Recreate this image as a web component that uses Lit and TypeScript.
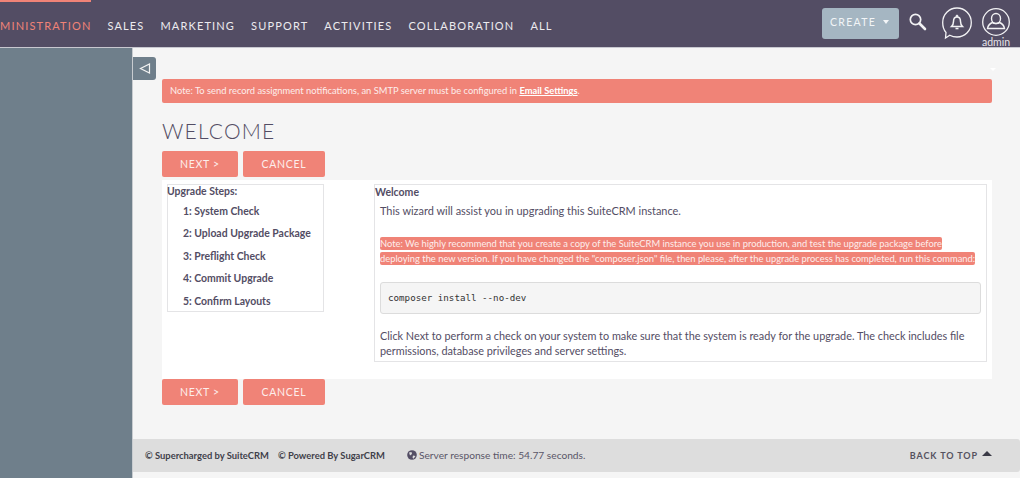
import { LitElement, html, css } from "lit";
import { customElement } from "lit/decorators.js";

@customElement("app-root")
export class AppRoot extends LitElement {
  static styles = css`
    :host { display: block; width: 1024px; height: 478px; overflow: hidden; background: #fff; font-family: Lato, "Open Sans", sans-serif; position: relative; }
    .page { width: 1020px; height: 478px; display: flex; flex-direction: column; }
    .top { height: 47px; flex: none; background: #534d64; display: flex; align-items: flex-start; position: relative; overflow: hidden; border-bottom: 1px solid #c8c8d0; box-sizing: content-box; }
    .nav { display: flex; margin-left: -18px; height: 47px; align-items: center; flex: none; }
    .nav a { font-size: 11px; letter-spacing: 1.15px; color: #ecebef; text-transform: uppercase; margin-right: 16px; white-space: nowrap; padding-top: 3px; }
    .nav a.on { color: #f08377; position: relative; }
    .accent { position: absolute; left: 0; top: 0; width: 91px; height: 2px; background: #f08377; }
    .create { position: absolute; left: 822px; top: 8px; width: 77px; height: 31px; background: #a5b6c2; border-radius: 3px; color: #f2f5f7; font-size: 10.5px; letter-spacing: 1.3px; display: flex; align-items: center; padding: 0 0 3px 8px; box-sizing: border-box; gap: 7px; }
    .caret { width: 0; height: 0; border-left: 3.5px solid transparent; border-right: 3.5px solid transparent; border-top: 4px solid #f4f6f8; margin-top: -1px; }
    .ico { position: absolute; }
    .adminlbl { position: absolute; left: 982px; top: 36px; font-size: 10.5px; color: #e6e5ea; line-height: 12px; }
    .body { flex: 1; display: flex; min-height: 0; }
    .side { width: 132px; flex: none; background: #6f7f8b; border-right: 1px solid #c8ccd0; }
    .main { flex: 1; background: #f5f5f5; position: relative; display: flex; flex-direction: column; min-width: 0; }
    .toggle { position: absolute; left: 0; top: 9px; width: 23px; height: 23px; background: #6f7f8b; border-radius: 0 3px 3px 0; display: flex; align-items: center; justify-content: center; }
    .smallcaret { position: absolute; right: 24px; top: 20px; width: 0; height: 0; border-left: 3px solid transparent; border-right: 3px solid transparent; border-top: 3px solid #fff; }
    .content { flex: 1; padding: 31px 28px 0 29px; }
    .alert { height: 24px; background: #f08377; border-radius: 2px; color: #fdeeec; font-size: 9.35px; line-height: 24px; padding-left: 8px; }
    .alert b { color: #fff; text-decoration: underline; font-weight: 700; }
    h1 { margin: 16px 0 0; font-weight: 300; font-size: 21px; line-height: 24px; letter-spacing: 1.2px; color: #534d64; height: 24px; }
    .btns { display: flex; gap: 5px; margin-top: 8px; height: 26px; }
    .panel + .btns { margin-top: 0; }
    .btn { height: 26px; background: #f08377; border-radius: 2px; color: #fdeeec; font-size: 10.5px; letter-spacing: 0.7px; display: flex; align-items: center; justify-content: center; box-sizing: border-box; }
    .next { width: 76px; }
    .cancel { width: 82px; }
    .panel { margin-top: 3px; height: 199px; background: #fff; padding: 4px 5px 0; box-sizing: border-box; display: flex; align-items: flex-start; }
    .steps { width: 157px; height: 128px; border: 1px solid #e4e4e6; box-sizing: border-box; flex: none; color: #534d64; font-size: 10.45px; }
    .steps .t { line-height: 14px; font-weight: 700; margin: -1px 0 0 -1px; }
    .steps ul { list-style: none; margin: 2px 0 0; padding: 0 0 0 15px; }
    .steps li { height: 22.4px; line-height: 22.4px; font-weight: 700; }
    .wel { margin-left: 50px; width: 613px; height: 178px; border: 1px solid #e4e4e6; box-sizing: border-box; color: #534d64; flex: none; }
    .wel .t { font-size: 10.5px; font-weight: 700; line-height: 14px; }
    .wel p { margin: 0 0 0 5px; }
    .p1 { font-size: 10.95px; line-height: 16px; margin-top: 4px !important; }
    .note { margin-top: 17px !important; line-height: 15.4px; font-size: 9.35px; color: #fdeeec; width: 600px; }
    .note span { background: #f08377; border-radius: 2px; padding: 1px 0; -webkit-box-decoration-break: clone; box-decoration-break: clone; }
    pre { margin: 15px 5px 0; height: 32px; background: #f5f5f5; border: 1px solid #dcdcdc; border-radius: 3px; box-sizing: border-box; padding: 0 7px; font-family: "DejaVu Sans Mono", monospace; font-size: 9.2px; line-height: 29px; color: #333; }
    .p3 { font-size: 10.85px; margin-top: 14px !important; line-height: 15.6px; }
    .foot { height: 33px; flex: none; margin: 0 0 6px; background: #dddddd; border-radius: 0 3px 3px 0; display: flex; align-items: center; color: #534d64; padding-left: 12px; position: relative; }
    .foot .c { font-size: 9.4px; font-weight: 700; color: #3f3f4a; white-space: nowrap; }
    .foot .c2 { margin-left: 9px; }
    .foot .srv { margin-left: 22px; font-size: 10.2px; color: #5a5668; display: flex; align-items: center; gap: 2px; white-space: nowrap; margin-top: -2px; }
    .foot .back { position: absolute; right: 28px; top: 11px; font-size: 9px; font-weight: 700; letter-spacing: 0.9px; color: #55525f; white-space: nowrap; display: flex; align-items: flex-start; gap: 4px; }
    .tri { width: 0; height: 0; border-left: 5px solid transparent; border-right: 5px solid transparent; border-bottom: 5px solid #3a3a46; margin-top: 1px; }
  `;

  render() {
    const nav = ["Administration", "Sales", "Marketing", "Support", "Activities", "Collaboration", "All"];
    const steps = ["1: System Check", "2: Upload Upgrade Package", "3: Preflight Check", "4: Commit Upgrade", "5: Confirm Layouts"];
    const buttons = html`<div class="btns"><div class="btn next">NEXT &gt;</div><div class="btn cancel">CANCEL</div></div>`;
    return html`
      <div class="page">
        <div class="top">
          <div class="accent"></div>
          <div class="nav">${nav.map((n, i) => html`<a class=${i === 0 ? "on" : ""}>${n}</a>`)}</div>
          <div class="create">CREATE <span class="caret"></span></div>
          <svg class="ico" style="left:908px;top:12px" width="20" height="20" viewBox="0 0 20 20" fill="none" stroke="#f2f2f4">
            <circle cx="7.500" cy="7.500" r="5.200" stroke-width="1.700"/><path d="M11.500 11.500L17 17" stroke-width="2.600" stroke-linecap="round"/>
          </svg>
          <svg class="ico" style="left:941px;top:6px" width="32" height="34" viewBox="0 0 32 34" fill="none" stroke="#f2f2f4">
            <path d="M5 26.500C2.800 24 1.700 20.800 1.700 16.500C1.700 8.500 8 2 16 2C24 2 30.300 8.500 30.300 16.500C30.300 24.500 24 31 16 31C13.500 31 11 30.400 8.800 29.200L4.500 32L5 26.500Z" stroke-width="1.300"/>
            <path d="M12.500 20.500H10.500C12 19 12.500 17.800 12.500 15.500C12.500 12.700 13.700 11 16 11C18.300 11 19.500 12.700 19.500 15.500C19.500 17.800 20 19 21.500 20.500H19.500Z" stroke-width="1.500"/>
            <path d="M14.500 22.500H17.500" stroke-width="1.600"/><circle cx="16" cy="10" r="0.900" fill="#f2f2f4"/>
          </svg>
          <svg class="ico" style="left:982px;top:8px" width="28" height="28" viewBox="0 0 28 28" fill="none" stroke="#f2f2f4">
            <circle cx="14" cy="14" r="13.300" stroke-width="1.300"/>
            <ellipse cx="14" cy="10.500" rx="4.500" ry="5" stroke-width="1.400"/>
            <path d="M10.500 14.500C8 15.500 6 17.500 5.500 20.500H22.500C22 17.500 20 15.500 17.500 14.500C16.500 16 11.500 16 10.500 14.500Z" stroke-width="1.400"/>
          </svg>
          <div class="adminlbl">admin</div>
        </div>
        <div class="body">
          <div class="side"></div>
          <div class="main">
            <div class="toggle">
              <svg width="12" height="11" viewBox="0 0 12 11" fill="none" stroke="#f2f2f2" stroke-width="1.200"><path d="M10.500 1V10L1.500 5.500Z"/></svg>
            </div>
            <div class="smallcaret"></div>
            <div class="content">
              <div class="alert">Note: To send record assignment notifications, an SMTP server must be configured in <b>Email Settings</b>.</div>
              <h1>WELCOME</h1>
              ${buttons}
              <div class="panel">
                <div class="steps">
                  <div class="t">Upgrade Steps:</div>
                  <ul>${steps.map((s) => html`<li>${s}</li>`)}</ul>
                </div>
                <div class="wel">
                  <div class="t">Welcome</div>
                  <p class="p1">This wizard will assist you in upgrading this SuiteCRM instance.</p>
                  <p class="note"><span>Note: We highly recommend that you create a copy of the SuiteCRM instance you use in production, and test the upgrade package before deploying the new version. If you have changed the "composer.json" file, then please, after the upgrade process has completed, run this command:</span></p>
                  <pre>composer install --no-dev</pre>
                  <p class="p3">Click Next to perform a check on your system to make sure that the system is ready for the upgrade. The check includes file permissions, database privileges and server settings.</p>
                </div>
              </div>
              ${buttons}
            </div>
            <div class="foot">
              <span class="c">© Supercharged by SuiteCRM</span>
              <span class="c c2">© Powered By SugarCRM</span>
              <span class="srv">
                <svg width="10" height="10" viewBox="0 0 10 10"><circle cx="5" cy="5" r="4.800" fill="#534d64"/><path d="M2 2.500L4.500 2L5 4L3 5.500ZM6 5.500L8.500 6L6.500 8.800L5.500 7.500Z" fill="#dddddd"/></svg>
                Server response time: 54.77 seconds.
              </span>
              <span class="back">BACK TO TOP <span class="tri"></span></span>
            </div>
          </div>
        </div>
      </div>
    `;
  }
}
